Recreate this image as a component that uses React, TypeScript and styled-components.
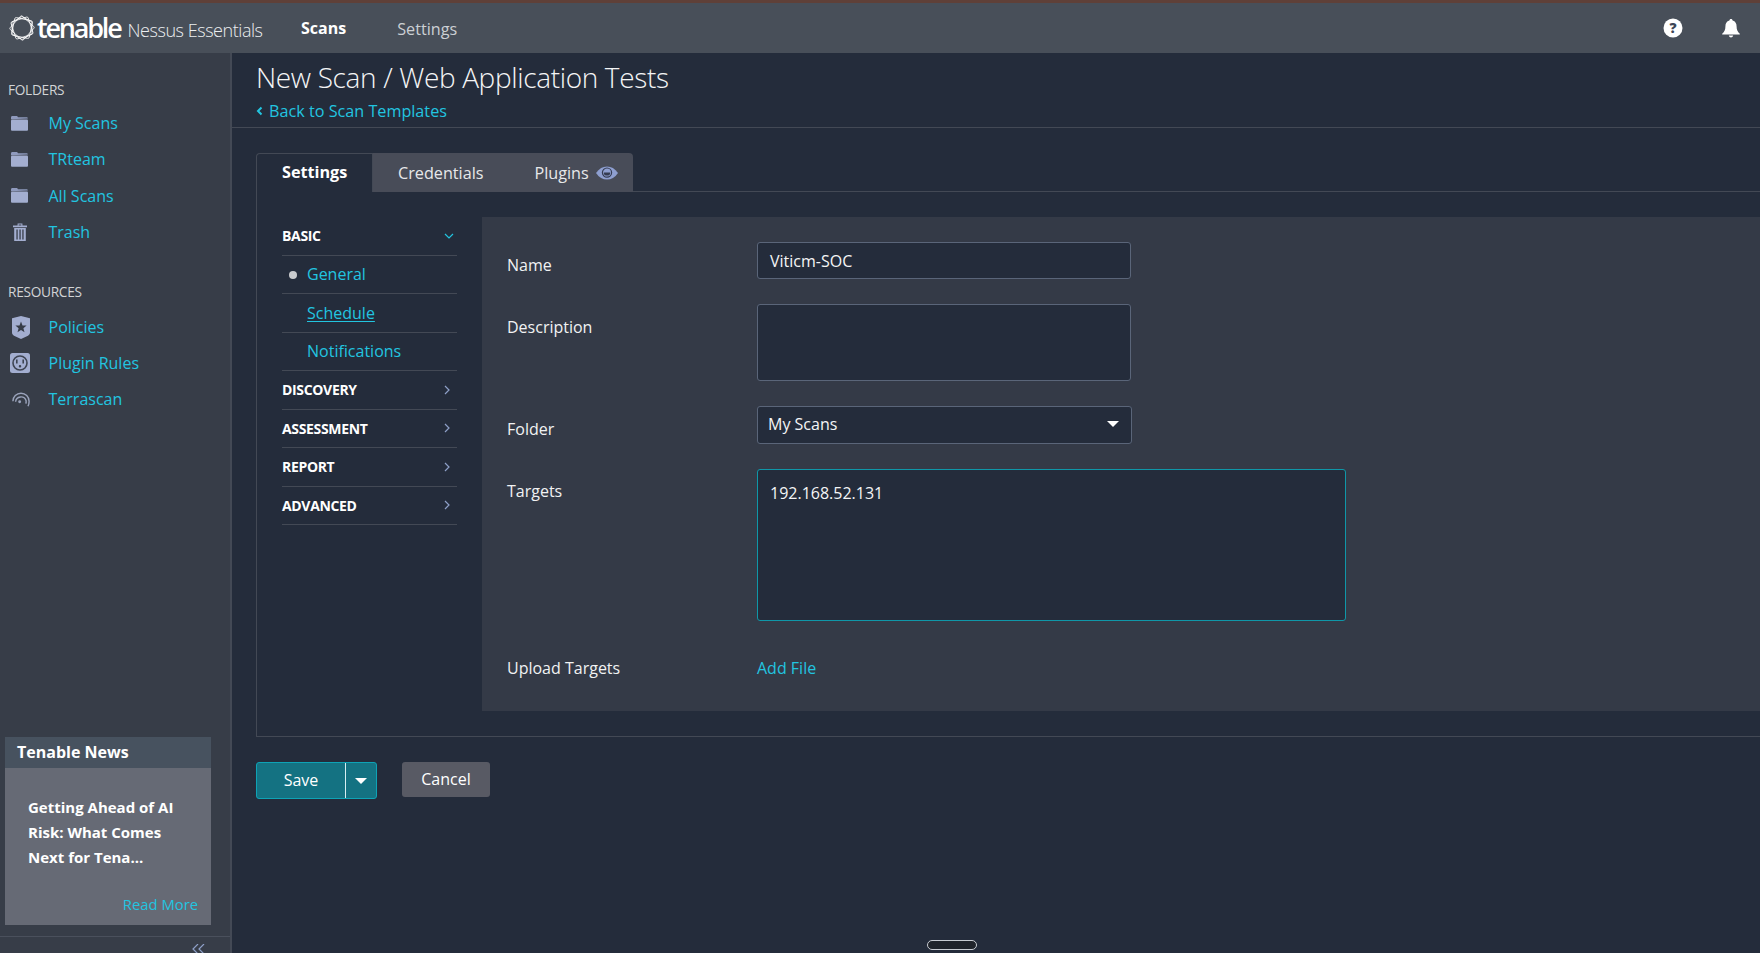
import React from "react";
import styled, { createGlobalStyle } from "styled-components";

const GlobalStyle = createGlobalStyle`
  html, body { margin: 0; padding: 0; background: #242c3b; }
  body { font-family: "Open Sans", "Liberation Sans", sans-serif; color: #fff; overflow: hidden; }
  * { box-sizing: border-box; }
`;

const Page = styled.div`
  width: 1760px;
  height: 953px;
  display: flex;
  flex-direction: column;
  position: relative;
  overflow: hidden;
`;

const Header = styled.header`
  height: 53px;
  flex: none;
  display: flex;
  align-items: center;
  background: #484f59;
  border-top: 3px solid #5f4038;
  padding: 0 20px 0 9px;
`;

const Logo = styled.div`
  display: flex;
  align-items: center;
  width: 292px;
`;

const LogoWord = styled.span`
  font-size: 27px;
  font-weight: 600;
  letter-spacing: -2.2px;
  margin-left: 2px;
  line-height: 30px;
`;

const LogoProduct = styled.span`
  font-size: 18px;
  font-weight: 300;
  letter-spacing: -0.45px;
  margin-left: 7px;
  margin-top: 3px;
  color: #eceef0;
`;

const NavItem = styled.span<{ $active?: boolean }>`
  font-size: ${p => (p.$active ? "16px" : "16.2px")};
  font-weight: ${p => (p.$active ? 700 : 400)};
  color: ${p => (p.$active ? "#fff" : "#ccd0d4")};
  margin-right: ${p => (p.$active ? "51px" : "0")};
  margin-top: ${p => (p.$active ? "0" : "2px")};
`;

const HeaderIcons = styled.div`
  margin-left: auto;
  display: flex;
  align-items: center;
  gap: 39px;
`;

const Body = styled.div`
  flex: 1;
  display: flex;
  min-height: 0;
`;

const Sidebar = styled.aside`
  width: 232px;
  flex: none;
  display: flex;
  flex-direction: column;
  background: #373d48;
  border-right: 2px solid #434955;
  padding-top: 27px;
`;

const SideHeading = styled.div<{ $mb: number }>`
  font-size: 13.7px;
  line-height: 20px;
  color: #d2d4d6;
  padding-left: 8px;
  letter-spacing: -0.3px;
  margin-bottom: ${p => p.$mb}px;
`;

const SideList = styled.div`
  display: flex;
  flex-direction: column;
  margin-bottom: 32px;
`;

const SideItem = styled.div<{ $h: number }>`
  height: ${p => p.$h}px;
  display: flex;
  align-items: center;
  padding-left: 11px;
  font-size: 16px;
  color: #22c5e0;
`;

const SideIcon = styled.span`
  width: 37.5px;
  flex: none;
  display: flex;
  align-items: center;
`;

const News = styled.div`
  margin: auto 19px 11px 5px;
  background: #666a75;
`;

const NewsTitle = styled.div`
  height: 31px;
  background: #47525f;
  font-size: 16px;
  font-weight: 700;
  line-height: 30px;
  padding-left: 12px;
`;

const NewsBody = styled.div`
  height: 157px;
  padding: 27px 13px 0 23px;
  display: flex;
  flex-direction: column;
  font-size: 15px;
  font-weight: 700;
  line-height: 25px;
`;

const ReadMore = styled.div`
  margin-top: auto;
  margin-bottom: 8px;
  text-align: right;
  font-size: 14.8px;
  font-weight: 400;
  color: #22c5e0;
`;

const Collapse = styled.div`
  height: 17px;
  flex: none;
  border-top: 1px solid #4a505c;
  display: flex;
  justify-content: flex-end;
  padding: 7px 25px 0 0;
`;

const Main = styled.main`
  flex: 1;
  min-width: 0;
  display: flex;
  flex-direction: column;
`;

const TitleBar = styled.div`
  height: 75px;
  flex: none;
  padding: 5px 0 0 24px;
  border-bottom: 1px solid #434955;
`;

const Title = styled.h1`
  margin: 0;
  font-size: 28px;
  font-weight: 300;
  line-height: 38px;
  letter-spacing: -0.35px;
  color: #f4f5f6;
`;

const BackLink = styled.div`
  display: flex;
  align-items: center;
  gap: 6px;
  font-size: 16.2px;
  line-height: 22px;
  margin-top: 4px;
  color: #22c5e0;
`;

const Content = styled.div`
  padding: 25px 0 0 24px;
`;

const Tabs = styled.div`
  display: flex;
  height: 39px;
  position: relative;
`;

const ActiveTab = styled.div`
  width: 117px;
  border: 1px solid #434955;
  border-bottom: none;
  border-radius: 4px 0 0 0;
  font-size: 16.2px;
  font-weight: 700;
  line-height: 37px;
  padding-left: 25px;
`;

const TabGroup = styled.div`
  width: 260px;
  height: 39px;
  display: flex;
  align-items: center;
  background: #484c58;
  border-radius: 0 4px 0 0;
  font-size: 16.2px;
  color: #e7e8ea;
  padding-left: 25px;
`;

const PluginsTab = styled.span`
  margin-left: 51px;
  display: flex;
  align-items: center;
  gap: 7px;
`;

const TabLine = styled.div`
  flex: 1;
  border-bottom: 1px solid #434955;
`;

const Panel = styled.div`
  height: 545px;
  display: flex;
  border-left: 1px solid #434955;
  border-bottom: 1px solid #434955;
  padding: 25px 0 25px 25px;
`;

const SectionMenu = styled.nav`
  width: 175px;
  flex: none;
  margin-right: 25px;
`;

const SectionRow = styled.div<{ $pr?: number }>`
  height: 38.5px;
  display: flex;
  align-items: center;
  justify-content: space-between;
  border-bottom: 1px solid #434955;
  font-size: 14px;
  font-weight: 700;
  letter-spacing: -0.33px;
  padding-right: ${p => p.$pr ?? 5}px;
`;

const SubRow = styled.div`
  height: 38.5px;
  position: relative;
  display: flex;
  align-items: center;
  border-bottom: 1px solid #434955;
  padding-left: 25px;
  font-size: 16px;
  color: #22c5e0;
`;

const Bullet = styled.span`
  position: absolute;
  left: 7px;
  top: 15px;
  width: 8px;
  height: 8px;
  border-radius: 50%;
  background: #c9cbce;
`;

const SubLink = styled.span<{ $underline?: boolean }>`
  text-decoration: ${p => (p.$underline ? "underline" : "none")};
  text-underline-offset: 2px;
`;

const FormPanel = styled.div`
  flex: 1;
  background: #343a47;
  padding: 25px 0 0 25px;
  display: flex;
  flex-direction: column;
`;

const FormRow = styled.div<{ $mb?: number }>`
  display: flex;
  margin-bottom: ${p => p.$mb ?? 25}px;
`;

const Label = styled.div<{ $top: number }>`
  width: 250px;
  flex: none;
  font-size: 16px;
  line-height: 22px;
  padding-top: ${p => p.$top}px;
  color: #f1f2f3;
`;

const Field = styled.div<{ $w?: number; $h?: number; $focus?: boolean }>`
  width: ${p => p.$w || 374}px;
  height: ${p => p.$h || 37}px;
  background: #242c3b;
  border: 1px solid ${p => (p.$focus ? "#0f97a8" : "#5a6579")};
  border-radius: 3px;
  padding: ${p => (p.$focus ? "12px 12px" : "7px 12px")};
  font-size: 16px;
  line-height: 22px;
  color: #f4f5f6;
`;

const SelectField = styled(Field)`
  display: flex;
  align-items: center;
  justify-content: space-between;
  padding: 0 12px 2px 10px;
`;

const Caret = styled.span`
  width: 0;
  height: 0;
  border-left: 6px solid transparent;
  border-right: 6px solid transparent;
  border-top: 6px solid #fff;
`;

const UploadRow = styled.div`
  display: flex;
  margin-top: 22px;
`;

const AddFile = styled.span`
  font-size: 16px;
  line-height: 22px;
  padding-top: 14px;
  color: #22c5e0;
`;

const Actions = styled.div`
  display: flex;
  align-items: flex-start;
  padding-top: 25px;
  gap: 25px;
`;

const SaveGroup = styled.div`
  width: 121px;
  height: 37px;
  display: flex;
  background: #147282;
  border: 1px solid #0ea3b6;
  border-radius: 3px;
  font-size: 16px;
`;

const SaveLabel = styled.div`
  width: 89px;
  line-height: 35px;
  text-align: center;
  border-right: 1px solid #d7eef1;
`;

const SaveCaret = styled.div`
  flex: 1;
  display: flex;
  align-items: center;
  justify-content: center;
`;

const CancelButton = styled.div`
  width: 88px;
  height: 35px;
  background: #585a64;
  border-radius: 3px;
  font-size: 16px;
  line-height: 34px;
  text-align: center;
`;

const Handle = styled.div`
  position: absolute;
  left: 927px;
  top: 940px;
  width: 50px;
  height: 10px;
  border-radius: 5px;
  background: #20242b;
  border: 1px solid #c8ccd2;
`;

const iconBlue = "#a3aed0";

const LogoMark = () => (
  <svg width="26" height="26" viewBox="0 0 26 26" fill="none" stroke="#fff" strokeWidth="0.8">
    {[0, 30, 60].map(a => (
      <rect key={a} x="4" y="4" width="18" height="18" rx="1.5" transform={`rotate(${a + 12} 13 13)`} />
    ))}
    <polygon points="13,1.5 23,7 23,19 13,24.5 3,19 3,7" />
  </svg>
);

const Folder = () => (
  <svg width="17" height="15" viewBox="0 0 17 15">
    <path d="M0 3.2V1.4C0 .6.6 0 1.4 0h4c.8 0 1.2.4 1.6 1.2h8.6c.8 0 1.4.6 1.2 1.4z" fill="#8f9abd" />
    <rect x="0" y="3.4" width="17" height="11.4" rx="1" fill={iconBlue} />
  </svg>
);

const Trash = () => (
  <svg width="14" height="18" viewBox="0 0 14 18" style={{ marginLeft: 2 }}>
    <path d="M0 2.5h4.6V.6h4.8v1.9H14v1.8H0zM5.6 1.5v1h2.8v-1z" fill={iconBlue} />
    <path d="M1.2 5h11.6v13H1.2zM3.4 6.5v10h1.3v-10zM6.4 6.5v10h1.3v-10zM9.3 6.5v10h1.3v-10z" fill={iconBlue} fillRule="evenodd" />
  </svg>
);

const Shield = () => (
  <svg width="18" height="23" viewBox="0 0 18 23" style={{ marginLeft: 1 }}>
    <path
      fillRule="evenodd"
      fill={iconBlue}
      d="M9 0l9 2.2v14.4c0 1.4-.7 2.4-2 3.2L9 23l-7-3.2c-1.3-.8-2-1.8-2-3.2V2.2zM9 5.5l-1.5 3.9-4.1.2 3.2 2.6-1.1 4L9 14l3.5 2.2-1.1-4 3.2-2.6-4.1-.2z"
    />
  </svg>
);

const Outlet = () => (
  <svg width="20" height="20" viewBox="0 0 20 20" style={{ marginLeft: -1 }}>
    <rect width="20" height="20" rx="2.5" fill={iconBlue} />
    <circle cx="10" cy="10" r="7" fill="none" stroke="#3e4452" strokeWidth="1.6" />
    <rect x="6" y="6.5" width="1.6" height="4" fill="#3e4452" />
    <rect x="12.4" y="6.5" width="1.6" height="4" fill="#3e4452" />
    <rect x="8.8" y="12" width="2.4" height="2.6" rx="1" fill="#3e4452" />
  </svg>
);

const Radar = () => (
  <svg width="18" height="17" viewBox="0 0 20 18" fill="none" stroke="#9aa3bb" strokeWidth="1.6" style={{ marginLeft: 1 }}>
    <path d="M1 11A9 9 0 0 1 19 11c0 2-.4 4-1.2 5.5" />
    <path d="M4 11.5A6 6 0 0 1 15.6 10c.3 1.4.2 2.6-.3 3.6" />
    <circle cx="8.5" cy="11.5" r="1.6" fill="#9aa3bb" stroke="none" />
  </svg>
);

const Eye = () => (
  <svg width="22" height="14" viewBox="0 0 22 14">
    <path d="M0 7C3 2.5 6.8.4 11 .4S19 2.5 22 7c-3 4.5-6.8 6.6-11 6.6S3 11.5 0 7z" fill="#8e9fd0" />
    <circle cx="11" cy="6.6" r="4.6" fill="none" stroke="#353c52" strokeWidth="1.2" />
    <path d="M7.8 6.4a3.2 3.2 0 0 0 6.4 0z" fill="#353c52" />
  </svg>
);

const Chevron = ({ dir = "right", color = "#8ea0c8" }: { dir?: "right" | "down"; color?: string }) => (
  <svg width="10" height="10" viewBox="0 0 10 10" fill="none" stroke={color} strokeWidth="1.2">
    {dir === "right" && <path d="M3 1l4 4-4 4" />}
    {dir === "down" && <path d="M1 3l4 4 4-4" />}
  </svg>
);

const HelpIcon = () => (
  <svg width="20" height="20" viewBox="0 0 20 20">
    <circle cx="10" cy="10" r="9.5" fill="#fff" />
    <text x="10" y="15" textAnchor="middle" fontSize="14" fontWeight="800" fill="#3d4656" fontFamily="Open Sans">?</text>
  </svg>
);

const BellIcon = () => (
  <svg width="18" height="19" viewBox="0 0 18 19" fill="#fff">
    <path d="M9 0c1 0 1.5.6 1.6 1.6C13.4 2.4 14.6 4.6 14.6 7.5c0 3.4.9 5.2 3.2 7.2v.8H.2v-.8c2.3-2 3.2-3.8 3.2-7.2 0-2.9 1.2-5.1 4-5.9C7.5.6 8 0 9 0z" />
    <path d="M6.8 16.6h4.4c-.3 1.2-1.1 1.9-2.2 1.9s-1.9-.7-2.2-1.9z" />
  </svg>
);

const folders = [
  { name: "My Scans", icon: <Folder /> },
  { name: "TRteam", icon: <Folder /> },
  { name: "All Scans", icon: <Folder /> },
  { name: "Trash", icon: <Trash /> },
];

const resources = [
  { name: "Policies", icon: <Shield /> },
  { name: "Plugin Rules", icon: <Outlet /> },
  { name: "Terrascan", icon: <Radar /> },
];

const sections = ["DISCOVERY", "ASSESSMENT", "REPORT", "ADVANCED"];

export default function App() {
  return (
    <Page>
      <GlobalStyle />
      <Header>
        <Logo>
          <LogoMark />
          <LogoWord>tenable</LogoWord>
          <LogoProduct>Nessus Essentials</LogoProduct>
        </Logo>
        <NavItem $active>Scans</NavItem>
        <NavItem>Settings</NavItem>
        <HeaderIcons>
          <HelpIcon />
          <BellIcon />
        </HeaderIcons>
      </Header>
      <Body>
        <Sidebar>
          <SideHeading $mb={5}>FOLDERS</SideHeading>
          <SideList>
            {folders.map(f => (
              <SideItem key={f.name} $h={36.3}>
                <SideIcon>{f.icon}</SideIcon>
                {f.name}
              </SideItem>
            ))}
          </SideList>
          <SideHeading $mb={7}>RESOURCES</SideHeading>
          <SideList>
            {resources.map(r => (
              <SideItem key={r.name} $h={36}>
                <SideIcon>{r.icon}</SideIcon>
                {r.name}
              </SideItem>
            ))}
          </SideList>
          <News>
            <NewsTitle>Tenable News</NewsTitle>
            <NewsBody>
              <div>
                Getting Ahead of AI
                <br />
                Risk: What Comes
                <br />
                Next for Tena...
              </div>
              <ReadMore>Read More</ReadMore>
            </NewsBody>
          </News>
          <Collapse>
            <svg width="13" height="10" viewBox="0 0 13 10" fill="none" stroke="#8ea0c8" strokeWidth="1.2">
              <path d="M6 0L1 5l5 5M12 0L7 5l5 5" />
            </svg>
          </Collapse>
        </Sidebar>
        <Main>
          <TitleBar>
            <Title>New Scan / Web Application Tests</Title>
            <BackLink>
              <svg width="7" height="10" viewBox="0 0 7 10" fill="none" stroke="#22c5e0" strokeWidth="2">
                <path d="M5.5 1.5L2 5l3.5 3.5" />
              </svg>
              Back to Scan Templates
            </BackLink>
          </TitleBar>
          <Content>
            <Tabs>
              <ActiveTab>Settings</ActiveTab>
              <TabGroup>
                Credentials
                <PluginsTab>
                  Plugins
                  <Eye />
                </PluginsTab>
              </TabGroup>
              <TabLine />
            </Tabs>
            <Panel>
              <SectionMenu>
                <SectionRow $pr={3}>
                  BASIC
                  <Chevron dir="down" color="#22c5e0" />
                </SectionRow>
                <SubRow>
                  <Bullet />
                  <SubLink>General</SubLink>
                </SubRow>
                <SubRow>
                  <SubLink $underline>Schedule</SubLink>
                </SubRow>
                <SubRow>
                  <SubLink>Notifications</SubLink>
                </SubRow>
                {sections.map(s => (
                  <SectionRow key={s}>
                    {s}
                    <Chevron />
                  </SectionRow>
                ))}
              </SectionMenu>
              <FormPanel>
                <FormRow>
                  <Label $top={12}>Name</Label>
                  <Field>Viticm-SOC</Field>
                </FormRow>
                <FormRow>
                  <Label $top={12}>Description</Label>
                  <Field $h={77} />
                </FormRow>
                <FormRow>
                  <Label $top={12}>Folder</Label>
                  <SelectField $w={375} $h={38}>
                    My Scans
                    <Caret />
                  </SelectField>
                </FormRow>
                <FormRow $mb={0}>
                  <Label $top={11}>Targets</Label>
                  <Field $w={589} $h={152} $focus>
                    192.168.52.131
                  </Field>
                </FormRow>
                <UploadRow>
                  <Label $top={14}>Upload Targets</Label>
                  <AddFile>Add File</AddFile>
                </UploadRow>
              </FormPanel>
            </Panel>
            <Actions>
              <SaveGroup>
                <SaveLabel>Save</SaveLabel>
                <SaveCaret>
                  <Caret />
                </SaveCaret>
              </SaveGroup>
              <CancelButton>Cancel</CancelButton>
            </Actions>
          </Content>
        </Main>
      </Body>
      <Handle />
    </Page>
  );
}
